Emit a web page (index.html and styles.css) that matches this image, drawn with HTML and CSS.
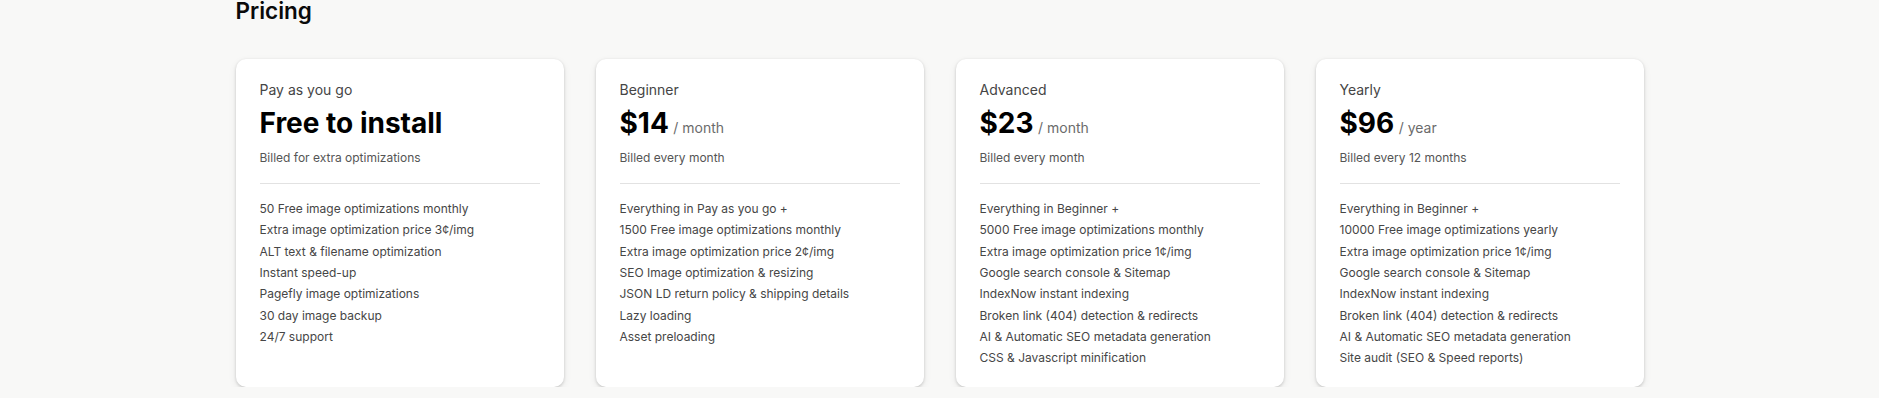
FILE: index.html
```html
<!DOCTYPE html>
<html lang="en">
<head>
<meta charset="utf-8">
<title>Pricing</title>
<link rel="stylesheet" href="styles.css">
</head>
<body>
<main class="page">
  <h2 class="heading">Pricing</h2>
  <section class="plans">
    <article class="card">
      <div class="plan-name">Pay as you go</div>
      <div class="price"><span class="amount">Free to install</span></div>
      <div class="billing">Billed for extra optimizations</div>
      <hr class="divider">
      <ul class="features">
        <li>50 Free image optimizations monthly</li>
        <li>Extra image optimization price 3¢/img</li>
        <li>ALT text &amp; filename optimization</li>
        <li>Instant speed-up</li>
        <li>Pagefly image optimizations</li>
        <li>30 day image backup</li>
        <li>24/7 support</li>
      </ul>
    </article>
    <article class="card">
      <div class="plan-name">Beginner</div>
      <div class="price"><span class="amount">$14</span> <span class="period">/ month</span></div>
      <div class="billing">Billed every month</div>
      <hr class="divider">
      <ul class="features">
        <li>Everything in Pay as you go +</li>
        <li>1500 Free image optimizations monthly</li>
        <li>Extra image optimization price 2¢/img</li>
        <li>SEO Image optimization &amp; resizing</li>
        <li>JSON LD return policy &amp; shipping details</li>
        <li>Lazy loading</li>
        <li>Asset preloading</li>
      </ul>
    </article>
    <article class="card">
      <div class="plan-name">Advanced</div>
      <div class="price"><span class="amount">$23</span> <span class="period">/ month</span></div>
      <div class="billing">Billed every month</div>
      <hr class="divider">
      <ul class="features">
        <li>Everything in Beginner +</li>
        <li>5000 Free image optimizations monthly</li>
        <li>Extra image optimization price 1¢/img</li>
        <li>Google search console &amp; Sitemap</li>
        <li>IndexNow instant indexing</li>
        <li>Broken link (404) detection &amp; redirects</li>
        <li>AI &amp; Automatic SEO metadata generation</li>
        <li>CSS &amp; Javascript minification</li>
      </ul>
    </article>
    <article class="card">
      <div class="plan-name">Yearly</div>
      <div class="price"><span class="amount">$96</span> <span class="period">/ year</span></div>
      <div class="billing">Billed every 12 months</div>
      <hr class="divider">
      <ul class="features">
        <li>Everything in Beginner +</li>
        <li>10000 Free image optimizations yearly</li>
        <li>Extra image optimization price 1¢/img</li>
        <li>Google search console &amp; Sitemap</li>
        <li>IndexNow instant indexing</li>
        <li>Broken link (404) detection &amp; redirects</li>
        <li>AI &amp; Automatic SEO metadata generation</li>
        <li>Site audit (SEO &amp; Speed reports)</li>
      </ul>
    </article>
  </section>
</main>
</body>
</html>
```

FILE: styles.css
```css
* { box-sizing: border-box; }
html, body { margin: 0; padding: 0; }
body {
  background: #f8f8f7;
  font-family: Inter, "Noto Sans", "Liberation Sans", sans-serif;
  color: #111;
  overflow: hidden;
}
.page {
  width: 1408px;
  margin: 0 auto;
}
.heading {
  margin: -3px 0 0;
  font-size: 22.5px;
  line-height: 28px;
  font-weight: 600;
  color: #0a0a0a;
}
.plans {
  margin-top: 34px;
  display: grid;
  grid-template-columns: repeat(4, 1fr);
  gap: 32px;
}
.card {
  background: #fff;
  border-radius: 10px;
  padding: 21px 24px 18px;
  box-shadow: 0 1px 3px rgba(0,0,0,0.18), 0 3px 8px rgba(0,0,0,0.07);
}
.plan-name {
  font-size: 14px;
  line-height: 20px;
  color: #454545;
}
.price {
  margin-top: 5px;
  height: 36px;
  line-height: 36px;
  white-space: nowrap;
}
.amount {
  font-size: 28px;
  font-weight: 700;
  color: #000;
}
.period {
  font-size: 14px;
  color: #6b6b6b;
}
.billing {
  margin-top: 9px;
  font-size: 12px;
  line-height: 16px;
  color: #555;
}
.divider {
  margin: 17px 0 0;
  border: 0;
  border-top: 1px solid #e2e2e2;
}
.features {
  list-style: none;
  margin: 14px 0 0;
  padding: 0;
  font-size: 12px;
  line-height: 21.33px;
  color: #464646;
}
```
